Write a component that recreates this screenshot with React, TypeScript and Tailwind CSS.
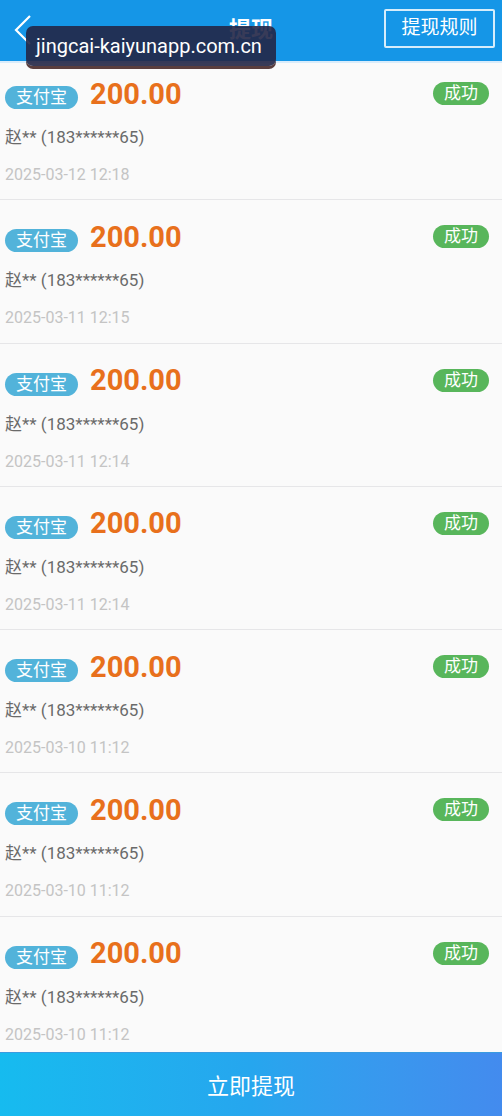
import React from "react";

const rows = [
  "2025-03-12 12:18",
  "2025-03-11 12:15",
  "2025-03-11 12:14",
  "2025-03-11 12:14",
  "2025-03-10 11:12",
  "2025-03-10 11:12",
  "2025-03-10 11:12",
];

function Row(props: { time: string }) {
  return (
    <div className="h-[143.3px] shrink-0 border-b border-[#e6e6e8] px-[5px] pt-[25px]">
      <div className="flex items-start justify-between">
        <div className="mt-[4px] flex h-[23px] items-center gap-[12px]">
          <span className="flex h-[23px] w-[73px] items-center justify-center rounded-full bg-[#52b3da] text-[17px] leading-none text-white">
            支付宝
          </span>
          <span className="-mt-[7px] text-[29px] font-bold leading-none text-[#e8701c]">200.00</span>
        </div>
        <span className="mr-[8px] flex h-[23px] w-[56px] items-center justify-center rounded-full bg-[#58b65b] text-[17px] leading-none text-white">
          成功
        </span>
      </div>
      <div className="mt-[18px] text-[17px] leading-[20px] text-[#6a6a6a]">赵** (183******65)</div>
      <div className="mt-[18px] text-[16px] leading-[20px] text-[#c4c4c4]">{props.time}</div>
    </div>
  );
}

export default function App() {
  return (
    <div
      className="flex h-screen w-full flex-col overflow-hidden bg-[#fafafa]"
      style={{ fontFamily: "Roboto, 'Noto Sans CJK SC', sans-serif" }}
    >
      <header className="relative z-10 flex h-[63px] shrink-0 items-center justify-between border-b-2 border-[#d9ecfb] bg-[#1596e7] pl-[13px] pr-[7px]">
        <svg width="20" height="32" viewBox="0 0 20 32" className="-mt-[2px]">
          <path d="M17 2 L3 16 L17 30" fill="none" stroke="#fff" strokeWidth="2.2" />
        </svg>
        <span className="absolute left-1/2 top-[15px] -translate-x-1/2 text-[22px] font-bold leading-[30px] text-white">
          提现
        </span>
        <div className="mb-[5px] flex h-[39px] w-[111px] items-center justify-center rounded-[2px] border-2 border-[#d6edfb] text-[19px] text-white">
          提现规则
        </div>
        <div className="absolute left-[26px] top-[26px] flex h-[40px] w-[250px] items-center rounded-[7px] bg-[#222646]/90 pl-[10px] text-[20px] text-white shadow-[0_3px_0_#5a3e3e]">
          jingcai-kaiyunapp.com.cn
        </div>
      </header>
      <div className="flex-1 overflow-hidden">
        <div className="-mt-[6px] flex flex-col">
          {rows.map((t, i) => (
            <Row key={i} time={t} />
          ))}
        </div>
      </div>
      <button className="flex h-[64px] shrink-0 items-center justify-center border-t border-[#3a9be0] bg-gradient-to-r from-[#16bbef] via-[#26a6ee] to-[#438bee] pt-[4px] text-[22px] text-white">
        立即提现
      </button>
    </div>
  );
}
